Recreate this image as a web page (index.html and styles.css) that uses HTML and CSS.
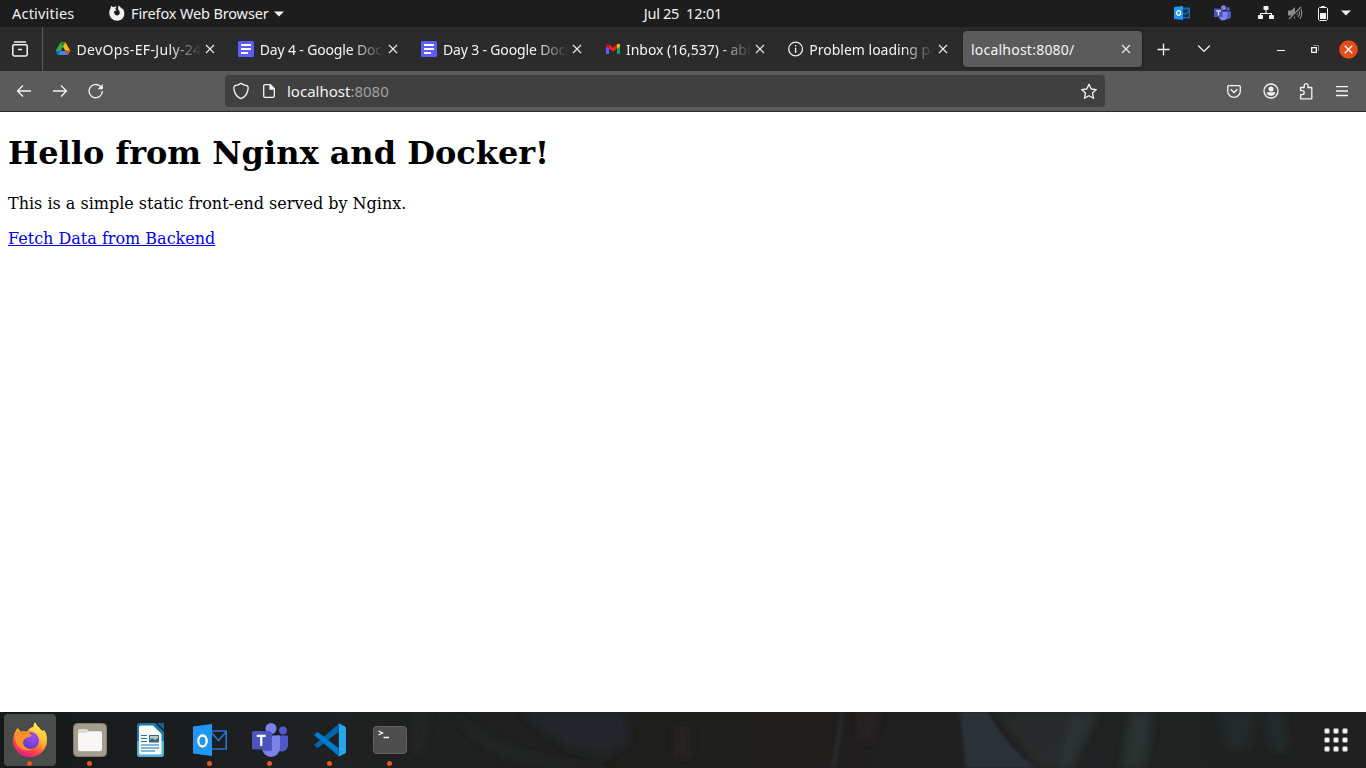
FILE: index.html
```html
<!DOCTYPE html>
<html lang="en">
<head>
<meta charset="utf-8">
<title>localhost:8080/</title>
<link rel="stylesheet" href="styles.css">
</head>
<body>
<header class="topbar">
  <div class="topbar-left">
    <span class="activities">Activities</span>
    <svg class="fox-mark" width="16" height="16" viewBox="0 0 16 16"><path fill="#f2f2f2" d="M2.1.7 4.2 2.3C5.5 1.3 6.7 1.3 7.7 1.5L6.2 3.7 7.6 5.2 5.4 6.1C4.7 7.5 5.3 10.4 8 10.5 10.8 10.4 11.4 7.7 10.1 5.8 8.7 4.6 8.7 2.1 10 .2 10.6 2 12.1 2.7 13.1 3.9L13.7 3.4C16.2 7 15.7 11.2 13.2 13.8 10.1 16.6 5.5 16.3 2.8 13.8.5 11.5-.4 8.2.7 5.1L1.5 3.6Z"/></svg>
    <span class="app-name">Firefox Web Browser</span>
    <svg class="caret" width="10" height="6" viewBox="0 0 10 6"><path fill="#f2f2f2" d="M0 .5H10L5 5.5Z"/></svg>
  </div>
  <div class="clock"><span class="date">Jul 25</span><span class="time">12:01</span></div>
  <div class="tray">
    <svg class="tray-outlook" width="16" height="16" viewBox="0 0 16 16"><path fill="#176bb1" d="M7 2.5h9v11H7z"/><path fill="#0b2b46" d="M9 4.5h5.5v1L11 8.5 9 7zM9 9l2 1.3 3.6-3V12H9z"/><path fill="#2196f3" d="M0 2 9 1v14L0 14z"/><ellipse cx="4.6" cy="8" rx="2" ry="2.3" fill="none" stroke="#fff" stroke-width="1.3"/></svg>
    <svg class="tray-teams" width="17" height="16" viewBox="0 0 17 16"><circle cx="14" cy="4" r="1.9" fill="#5059c9"/><circle cx="9.5" cy="2.8" r="2.5" fill="#7b83eb"/><path fill="#5059c9" d="M12 6.5h5v5a3 3 0 0 1-5 2z"/><path fill="#7b83eb" d="M5 6.5h8.5V11a4.3 4.3 0 0 1-8.5 1z"/><path fill="#4b53bc" d="M0 3.5h8.5V12H0z"/><path fill="#e0e1ff" d="M2 5.3h5v1.2H5.1v4H3.8v-4H2z"/></svg>
    <svg class="tray-net" width="16" height="14" viewBox="0 0 16 14"><path fill="#f2f2f2" d="M6 0h4l.5.5v3L10 4H8.500v3H14v2h1.500l.5.5v3l-.5.5h-4l-.5-.5v-3l.5-.5H13V8H8.500v0H3v1h1.500l.5.5v3l-.5.5h-4l-.5-.5v-3L.5 9H2V7h5.500V4H6l-.5-.5v-3z"/></svg>
    <svg class="tray-vol" width="16" height="14" viewBox="0 0 16 14"><path fill="#8b8b8b" d="M1 4.5h3L8 1v12L4 9.5H1z"/><path fill="none" stroke="#8b8b8b" stroke-width="1.2" d="M9.5 5q1.4 2 0 4M11 3q3 4 0 8M13 1q3.5 6 0 12"/><path stroke="#1d1d1d" stroke-width="2.6" d="M3 14 14 1"/><path stroke="#8b8b8b" stroke-width="1.2" d="m2 13 12-12"/></svg>
    <svg class="tray-bat" width="10" height="15" viewBox="0 0 10 15"><path fill="none" stroke="#f2f2f2" d="M3.5 1.5v-1h3v1M1.5 1.5h7l1 1v11l-1 1h-7l-1-1v-11z"/><path fill="#f2f2f2" d="M2 7h6v6H2z"/></svg>
    <svg class="tray-caret" width="10" height="6" viewBox="0 0 10 6"><path fill="#f2f2f2" d="M0 .5H10L5 5.5Z"/></svg>
  </div>
</header>

<nav class="tabbar">
  <div class="view">
    <svg width="16" height="16" viewBox="0 0 16 16" fill="none" stroke="#f4f4f5" stroke-width="1.5" stroke-linecap="round"><path d="M2.5 .9h11M1.6 3.8h12.800l.8.8v8.700a1.800 1.800 0 0 1-1.800 1.800H2.600a1.800 1.800 0 0 1-1.800-1.800V4.600zM6.500 8.500h3"/></svg>
  </div>
  <div class="tabs">
    <div class="tab">
      <svg class="favicon" width="16" height="16" viewBox="0 0 16 16"><path fill="#34a853" d="M5.400 1.600 8 5.800 3.200 13.800.7 9.700z"/><path fill="#fbbc04" d="M5.600 1.300h4.800l4.900 8.400h-5z"/><path fill="#188038" d="M5.400 1.300h5L8 5.600z"/><path fill="#4285f4" d="M5.300 10h5.200l2.500 4H3.100z"/><path fill="#ea4335" d="M10.300 10h5.100L13 14z"/><path fill="#1967d2" d="M.5 10h5l-2.500 4z"/></svg>
      <span class="label t1">DevOps-EF-July-24</span>
      <svg class="close" width="10" height="10" viewBox="0 0 10 10"><path d="m1 1 8 8M9 1 1 9"/></svg>
    </div>
    <div class="tab">
      <svg class="favicon" width="16" height="16" viewBox="0 0 16 16"><rect width="16" height="16" rx="1.5" fill="#5f5cff"/><path fill="#fff" d="M3 3h10v2H3zM3 7h10v2H3zM3 11h7v2H3z"/></svg>
      <span class="label t2">Day 4 - Google Docs</span>
      <svg class="close" width="10" height="10" viewBox="0 0 10 10"><path d="m1 1 8 8M9 1 1 9"/></svg>
    </div>
    <div class="tab">
      <svg class="favicon" width="16" height="16" viewBox="0 0 16 16"><rect width="16" height="16" rx="1.5" fill="#5f5cff"/><path fill="#fff" d="M3 3h10v2H3zM3 7h10v2H3zM3 11h7v2H3z"/></svg>
      <span class="label t2">Day 3 - Google Docs</span>
      <svg class="close" width="10" height="10" viewBox="0 0 10 10"><path d="m1 1 8 8M9 1 1 9"/></svg>
    </div>
    <div class="tab">
      <svg class="favicon" width="16" height="16" viewBox="0 0 16 16"><path fill="#5f5cff" d="M1 5l3 2v6H2a1 1 0 0 1-1-1z"/><path fill="#0fa958" d="M12 7l3-2v7a1 1 0 0 1-1 1h-2z"/><path fill="#ff1d1d" d="M4 3.6 8 6.8l4-3.2v4L8 10.5 4 7.6z"/><path fill="#c00810" d="M1 4.5C1 2.6 2.8 2.4 4 3.5v4L1 5.4z"/><path fill="#ffc400" d="M15 4.5c0-1.9-1.8-2.1-3-1v4l3-2.1z"/></svg>
      <span class="label t3">Inbox (16,537) - abhi</span>
      <svg class="close" width="10" height="10" viewBox="0 0 10 10"><path d="m1 1 8 8M9 1 1 9"/></svg>
    </div>
    <div class="tab">
      <svg class="favicon" width="16" height="16" viewBox="0 0 16 16"><circle cx="7.600" cy="8" r="6.900" fill="none" stroke="#ededf0" stroke-width="1.300"/><path fill="#ededf0" d="M6.900 4h1.400v1.500H6.900zM6.900 6.700h1.400V12H6.900z"/></svg>
      <span class="label t4">Problem loading page</span>
      <svg class="close" width="10" height="10" viewBox="0 0 10 10"><path d="m1 1 8 8M9 1 1 9"/></svg>
    </div>
    <div class="tab active">
      <span class="label t5">localhost:8080/</span>
      <svg class="close" width="10" height="10" viewBox="0 0 10 10"><path d="m1 1 8 8M9 1 1 9"/></svg>
    </div>
  </div>
  <svg class="newtab" width="13" height="13" viewBox="0 0 13 13"><path d="M6.500 .5v12M.5 6.500h12" stroke="#f4f4f5" stroke-width="1.300"/></svg>
  <svg class="alltabs" width="12" height="8" viewBox="0 0 12 8"><path d="m.6 1 5.400 5.400L11.400 1" fill="none" stroke="#f4f4f5" stroke-width="1.300" stroke-linecap="round"/></svg>
  <svg class="minimize" width="8" height="2" viewBox="0 0 8 2"><path d="M0 0h8v1H0z" fill="#fff"/></svg>
  <svg class="restore" width="8" height="8" viewBox="0 0 8 8"><path d="M2 .5h5.500V6" fill="none" stroke="#8b8b8b"/><path d="M.7 2.700h4.600v4.600H.7z" fill="none" stroke="#fff" stroke-width="1.300"/></svg>
  <svg class="winclose" width="19" height="19" viewBox="0 0 19 19"><circle cx="9.500" cy="9.500" r="9.300" fill="#e64d1a"/><path d="m5.800 5.800 7.400 7.400m0-7.400-7.400 7.400" stroke="#fff" stroke-width="1.400"/></svg>
</nav>

<div class="navbar">
  <svg class="back" width="16" height="14" viewBox="0 0 16 14"><path d="M15 7H1.600M7 1.500 1.500 7 7 12.500"/></svg>
  <svg class="forward" width="16" height="14" viewBox="0 0 16 14"><path d="M1 7h13.400M9 1.500 14.500 7 9 12.500"/></svg>
  <svg class="reload" width="16" height="16" viewBox="0 0 16 16"><path d="M14.300 8A6.600 6.600 0 1 1 12 3.100l1 1.100"/><path d="M14.800 1v5.200H9.600z" fill="#f4f4f5" stroke="none"/></svg>
  <div class="urlbar">
    <svg class="shield" width="16" height="18" viewBox="0 0 16 18"><path d="M8 1.400c-2 1.300-3.900 2-6.500 2.500C.8 4.500.8 6.500 1.200 8.500 2 12 4.500 15.300 8 16.600c3.500-1.300 6-4.600 6.800-8.100.4-2 .4-4-.3-4.600C11.900 3.400 10 2.700 8 1.400z"/></svg>
    <svg class="page" width="12" height="14" viewBox="0 0 12 14"><path d="M7.200.7H2A1.300 1.300 0 0 0 .7 2v10A1.300 1.300 0 0 0 2 13.300h8a1.300 1.300 0 0 0 1.300-1.300V4.800z"/><path d="M7 .7v4.300h4.500z" fill="#f4f4f5"/></svg>
    <span class="url">localhost<span class="port">:8080</span></span>
    <svg class="star" width="18" height="17" viewBox="0 0 18 17"><path d="M9 1.300 11.200 6l5.100.6-3.800 3.500 1.100 5.200L9 12.700l-4.600 2.600 1.100-5.200L1.700 6.600 6.800 6z" stroke-linejoin="round"/></svg>
  </div>
  <svg class="pocket" width="14" height="13" viewBox="0 0 14 13"><path d="M1.700.7h10.600a1 1 0 0 1 1 1V6A6.300 6.300 0 0 1 .7 6V1.700a1 1 0 0 1 1-1zM3.600 4.200 7 7.500l3.400-3.300"/></svg>
  <svg class="account" width="16" height="16" viewBox="0 0 16 16"><circle cx="8" cy="8" r="7"/><circle cx="8" cy="6" r="2.500" fill="#f4f4f5" stroke="none"/><path d="M3.600 9.300h8.800q-.8 3.500-4.400 3.500T3.600 9.300z" fill="#f4f4f5" stroke="none"/></svg>
  <svg class="puzzle" width="15" height="17" viewBox="0 0 15 17"><path d="M1.600 15.800h11.200V4.500H9V2.600a1.900 1.900 0 0 0-3.800 0v1.900H1.600v3.100h1.600a2 2 0 0 1 0 4H1.600z" stroke-linejoin="round"/></svg>
  <svg class="menu" width="12" height="11" viewBox="0 0 12 11"><path d="M0 .500h12M0 5h12M0 9.500h12"/></svg>
</div>

<main class="content">
  <h1 class="title">Hello from Nginx and Docker!</h1>
  <p class="intro">This is a simple static front-end served by Nginx.</p>
  <a class="fetch" href="#">Fetch Data from Backend</a>
</main>

<footer class="dock">
  <svg class="wallpaper" width="1366" height="56" viewBox="0 0 1366 56">
    <defs>
      <filter id="soft" x="-20%" y="-20%" width="140%" height="140%"><feGaussianBlur stdDeviation="4"/></filter>
      <filter id="edge" x="-20%" y="-20%" width="140%" height="140%"><feGaussianBlur stdDeviation="1.500"/></filter>
    </defs>
    <g filter="url(#soft)">
      <path fill="#24282c" d="M520 0h105l5 30-25 14-40-10z"/>
      <path fill="#242828" d="M455 0q50 52 170 56h-60Q480 50 455 0zM415 0h15l-8 40h-10z"/>
      <path fill="#282320" d="M675 15h16v30h-16zM858 0h22l-8 30h-12z"/>
      <path fill="#252a2b" d="M995 0h85l-30 56h-12z"/>
      <path fill="#2a3032" d="M1072 0h26l-26 56h-18zM1130 0h24l-10 56h-22z"/>
      <path fill="#242b2c" d="M1218 0h38l-8 36h-20zM1262 0h22l4 38h-16z"/>
    </g>
    <g filter="url(#edge)">
      <path fill="#2c3338" d="M960 0h28q20 36 48 56h-70z"/>
      <path fill="#292b2b" d="M841 0h3l-8 56h-5z"/>
    </g>
  </svg>
  <div class="apps">
    <div class="app current"><svg width="52" height="52" viewBox="0 0 52 52">
      <defs>
        <linearGradient id="flame" x1=".8" y1=".1" x2=".3" y2="1"><stop offset="0" stop-color="#ffe34a"/><stop offset=".35" stop-color="#ffa52e"/><stop offset=".65" stop-color="#ff4b40"/><stop offset="1" stop-color="#f0148c"/></linearGradient>
        <radialGradient id="globe" cx=".65" cy=".25" r=".8"><stop offset="0" stop-color="#a34bf5"/><stop offset="1" stop-color="#5a3cc8"/></radialGradient>
        <linearGradient id="tail" x1="0" y1="0" x2="0" y2="1"><stop offset="0" stop-color="#fff14f"/><stop offset="1" stop-color="#ffa52d"/></linearGradient>
      </defs>
      <path fill="url(#flame)" d="M13.500 14l3.500 4c2-1 4-1 6 0 1-3 4-5 7-5l9 4 1-1c2.500 3 3 7 3 10.500a17 16.500 0 0 1-34 0c0-5 2-9 4.500-12.500z"/>
      <path fill="url(#tail)" d="M31 8c1 3 4 5 7 9l1 .5 1-1.500c4 8 2 16-3 20 2-7 1-12-3-15-5-2-6-9-3-13z"/>
      <circle cx="26.500" cy="26.500" r="8.500" fill="url(#globe)"/>
      <path fill="#ff8f28" d="M12 18c3-1 8-1 10 0 2-1 3-2 5-2l-2 3.500 3 1.500c-1 2-4 2-6 3-2 1-3 3-3 5 1 5 6 7 10 6-6 4-15 0-17-6-1-4-1-8 0-11z"/>
    </svg><i class="dot"></i></div>
    <div class="app"><svg width="52" height="52" viewBox="0 0 52 52"><rect x="9.500" y="9.500" width="33" height="33" rx="4" fill="#a49d8c" stroke="#827c6e"/><rect x="14" y="17.300" width="24" height="20" rx="2" fill="#f8f7f5"/><path fill="#dcd8ce" d="M14 19v-2.500a1.500 1.500 0 0 1 1.500-1.500H22a2 2 0 0 1 2 1l.5 1.200L22 19z"/></svg><i class="dot"></i></div>
    <div class="app"><svg width="52" height="52" viewBox="0 0 52 52">
      <path fill="#1e79ad" d="M16 9h15l9 9v22a3 3 0 0 1-3 3H16a3 3 0 0 1-3-3V12a3 3 0 0 1 3-3z"/><path fill="#51afd8" d="M13 27h27v13a3 3 0 0 1-3 3H16a3 3 0 0 1-3-3z"/><path fill="#f9fbfc" d="M16.500 11.500H29l8.500 8.500v20.500h-21A1.500 1.500 0 0 1 15 39V13a1.500 1.500 0 0 1 1.500-1.500z"/><path fill="#155f8d" d="M33 9h7v7z"/><path fill="none" stroke="#1673aa" stroke-width="1.200" d="M17 21.500h6M17 24.500h6M17 27.500h6M17 31h18M17 34h18M17 37h14"/><path fill="#3b6680" d="M25 21h10v7.500H25z"/><path fill="#a5cfe0" d="M26 22h8v2l-3 2-3-2-2 2z"/><circle cx="33" cy="23" r="1.200" fill="#f3bb36"/></svg></div>
    <div class="app"><svg width="52" height="52" viewBox="0 0 52 52"><path fill="none" stroke="#1d78cf" stroke-width="1.600" d="M27 17h15.200v18H27M27 18l7.500 8.500L42 18"/><path fill="#2196f3" d="m9 12.500 19-2.500v32l-19-2.500z"/><ellipse cx="18.500" cy="27" rx="4.200" ry="5.500" fill="none" stroke="#fff" stroke-width="2.300"/></svg><i class="dot"></i></div>
    <div class="app"><svg width="52" height="52" viewBox="0 0 52 52"><circle cx="39" cy="16.500" r="4" fill="#5059c9"/><circle cx="27" cy="14.500" r="5.500" fill="#7b83eb"/><path fill="#5059c9" d="M33 21.500h11V31a6.500 6.500 0 0 1-10 5.500z"/><path fill="#7b83eb" d="M18 21.500h18V34a9 9 0 0 1-18 0z"/><path fill="#5059b8" d="M20 18h8v17.500a1.500 1.500 0 0 1-1.500 1.500H19z"/><rect x="8" y="17" width="18.500" height="18.500" rx="1.500" fill="#4b53bc"/><path fill="#fff" d="M12.700 20.800h9v2.100h-3.300v9h-2.300v-9h-3.400z"/></svg><i class="dot"></i></div>
    <div class="app"><svg width="52" height="52" viewBox="0 0 52 52"><path fill="#0065a9" d="m10 31 2.500 2.500q1 .8 2 0L34.500 18v-8z"/><path fill="#007acc" d="m10 21 2.500-2.500q1-.8 2 0L34.500 34v8z"/><path fill="#25a7ee" d="M34 10q.8-.5 1.600-.2L41 12.500q1 .6 1 1.500v24q0 1-1 1.500l-5.500 2.700q-1 .4-2-.4 1.300.3 1.300-1.300v-29q0-1.700-1.300-1z"/></svg><i class="dot"></i></div>
    <div class="app"><svg width="52" height="52" viewBox="0 0 52 52"><rect x="9.500" y="12.500" width="33" height="27" rx="3" fill="#4d4d4d" stroke="#626262"/><path fill="none" stroke="#fff" stroke-width="1.300" d="m14.500 17 4 2-4 2M19.500 23.500H25"/></svg><i class="dot"></i></div>
  </div>
  <div class="grid"><i></i><i></i><i></i><i></i><i></i><i></i><i></i><i></i><i></i></div>
</footer>
</body>
</html>
```
FILE: styles.css
```css
* { box-sizing: border-box; }
body {
  margin: 0;
  width: 1366px;
  height: 768px;
  overflow: hidden;
  display: flex;
  flex-direction: column;
  background: #fff;
  font-family: "Noto Sans", "Open Sans", sans-serif;
  font-size: 14px;
}
svg { display: block; flex: none; }
span { white-space: pre; }

.topbar {
  height: 27px;
  flex: none;
  display: grid;
  grid-template-columns: 1fr auto 1fr;
  align-items: center;
  background: #1d1d1d;
  color: #f2f2f2;
  font-size: 14.500px;
}
.topbar span { line-height: 20px; margin-bottom: 1px; }
.topbar-left { display: flex; align-items: center; padding-left: 12px; }
.activities { width: 97px; letter-spacing: 0.200px; }
.fox-mark { margin: 0 6px 1px 0; }
.app-name { width: 138px; letter-spacing: -0.140px; }
.caret { margin-left: 5px; }
.clock { display: flex; gap: 7px; }
.date { letter-spacing: -0.300px; }
.time { letter-spacing: -0.200px; }
.tray { display: flex; align-items: center; justify-content: flex-end; padding: 0 15px 1px 0; }
.tray-teams { margin-left: 24px; }
.tray-net { margin-left: 27px; }
.tray-vol { margin-left: 13px; }
.tray-bat { margin-left: 15px; }
.tray-caret { margin-left: 13px; }

.tabbar {
  height: 44px;
  flex: none;
  display: flex;
  align-items: center;
  background: #2b2b2b;
  color: #f4f4f5;
}
.view {
  width: 43px;
  height: 44px;
  padding-left: 12px;
  display: flex;
  align-items: center;
  border-right: 1px solid #5b5b5b;
}
.tabs { display: flex; gap: 4px; margin-left: 4px; }
.tab {
  width: 179.200px;
  height: 36px;
  display: flex;
  align-items: center;
  padding: 0 11px 0 8px;
  border-radius: 4px;
}
.tab.active { background: #5b5b5b; box-shadow: 0 0 3px rgba(0, 0, 0, 0.500); }
.favicon { margin-right: 5.500px; }
.label {
  flex: 1;
  min-width: 0;
  overflow: hidden;
  margin-right: 4px;
  -webkit-mask-image: linear-gradient(to left, transparent, #000 32px);
  mask-image: linear-gradient(to left, transparent, #000 32px);
}
.t1 { letter-spacing: 0.350px; }
.t2 { letter-spacing: -0.150px; }
.t3 { letter-spacing: -0.050px; }
.t5 { letter-spacing: 0.230px; }
.active .label { -webkit-mask-image: none; mask-image: none; }
.close { stroke: #ededf0; stroke-width: 1.100; }
.newtab { margin-left: 15px; }
.alltabs { margin-left: 28px; }
.minimize { margin: 4px 0 0 67px; }
.restore { margin-left: 26px; }
.winclose { margin-left: 20px; }

.navbar {
  height: 41px;
  flex: none;
  display: flex;
  align-items: center;
  background: #5b5b5b;
  border-bottom: 1px solid #2b2b2b;
}
.navbar svg { fill: none; stroke: #f4f4f5; stroke-width: 1.300; }
.back { margin-left: 16px; }
.forward { margin-left: 20px; }
.reload { margin-left: 20px; }
.urlbar {
  width: 880px;
  height: 32px;
  margin-left: 121px;
  padding: 0 7px 0 8px;
  display: flex;
  align-items: center;
  border-radius: 4px;
  background: #404040;
  color: #f4f4f5;
}
.page { margin-left: 14px; }
.url { flex: 1; margin-left: 12px; font-size: 15px; }
.port { color: #a0a0a0; }
.pocket { margin-left: 122px; }
.account { margin-left: 21.500px; }
.puzzle { margin-left: 20.500px; }
.menu { margin-left: 22px; }

.content {
  flex: 1;
  padding: 1px 8px 0;
  font: 16px "DejaVu Serif", serif;
  color: #000;
}
.title { margin: 21.400px 0; font-size: 32px; line-height: 38px; }
.intro { margin: 16px 0; line-height: 19px; }
.fetch { color: #0000ee; line-height: 19px; }

.dock {
  position: relative;
  height: 56px;
  flex: none;
  display: flex;
  align-items: center;
  justify-content: space-between;
  padding: 0 18px 0 4px;
  overflow: hidden;
  background: linear-gradient(90deg, #171819, #1f2122 25%, #1e1f1d 45%, #201e1d 60%, #202323 80%, #1f201f);
}
.wallpaper { position: absolute; left: 0; top: 0; }
.apps { display: flex; gap: 8px; }
.app { position: relative; width: 52px; height: 52px; border-radius: 4px; }
.current { background: #4a4b4b; }
.dot {
  position: absolute;
  left: 23px;
  bottom: 0;
  width: 5px;
  height: 5px;
  border-radius: 50%;
  background: #e95420;
}
.grid { position: relative; display: grid; grid-template-columns: repeat(3, 6px); gap: 3px; }
.grid i { height: 6px; border-radius: 2px; background: #f5f5f5; border: .5px solid #888; }
```
